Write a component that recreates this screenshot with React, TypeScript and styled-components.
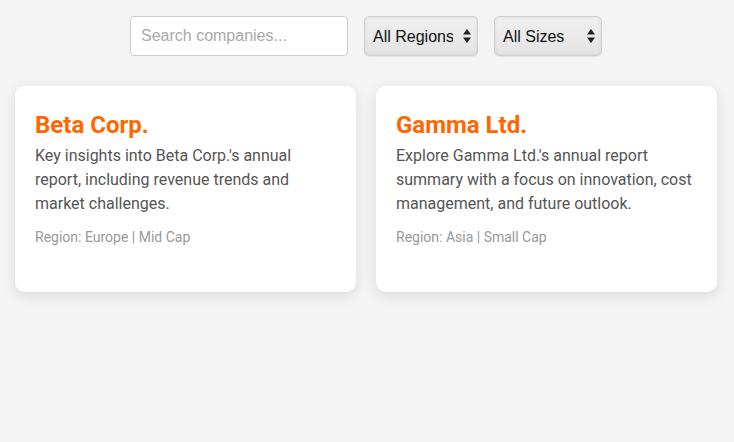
import React from "react";
import styled, { createGlobalStyle } from "styled-components";

const GlobalStyle = createGlobalStyle`
  html, body { margin: 0; padding: 0; }
  body {
    background: #f4f4f4;
    font-family: Roboto, "Liberation Sans", Arial, sans-serif;
    min-height: 442px;
  }
`;

const Page = styled.div`
  display: flex;
  flex-direction: column;
  gap: 30px;
  padding: 16px 17px 20px 15px;
`;

const Toolbar = styled.div`
  display: flex;
  justify-content: center;
  gap: 16px;
`;

const SearchInput = styled.input`
  box-sizing: border-box;
  width: 218px;
  height: 40px;
  padding: 0 10px;
  border: 1px solid #cccccc;
  border-radius: 4px;
  background: #fff;
  font-family: "Liberation Sans", Arial, sans-serif;
  font-size: 16px;
  color: #333;
  outline: none;
  &::placeholder { color: #a9a9a9; }
`;

const SelectWrap = styled.div<{ $w: number }>`
  position: relative;
  width: ${(p) => p.$w}px;
  height: 40px;
`;

const Select = styled.select`
  appearance: none;
  -webkit-appearance: none;
  box-sizing: border-box;
  width: 100%;
  height: 100%;
  padding: 0 24px 0 8px;
  border: 1px solid #d0d0d0;
  border-radius: 5px;
  background: linear-gradient(#efefef, #e9e9e9 60%, #e3e3e3);
  box-shadow: inset 0 0 3px rgba(0, 0, 0, 0.1), 0 1px 1px rgba(0, 0, 0, 0.06);
  font-family: "Liberation Sans", Arial, sans-serif;
  font-size: 16px;
  color: #111;
  outline: none;
`;

const Arrows = styled.svg`
  position: absolute;
  right: 7px;
  top: 13px;
  width: 8px;
  height: 14px;
  pointer-events: none;
`;

const Grid = styled.div`
  display: grid;
  grid-template-columns: 1fr 1fr;
  gap: 20px;
`;

const Card = styled.div`
  box-sizing: border-box;
  min-height: 206px;
  padding: 25px 20px 20px;
  background: #fff;
  border-radius: 10px;
  box-shadow: 0 4px 14px rgba(0, 0, 0, 0.1);
  display: flex;
  flex-direction: column;
`;

const Title = styled.h2`
  margin: 0 0 5px;
  font-size: 24px;
  font-weight: 700;
  line-height: 28px;
  color: #ff6600;
`;

const Desc = styled.p`
  margin: 0 0 11px;
  font-size: 16px;
  line-height: 24px;
  color: #555;
`;

const Meta = styled.p`
  margin: 0;
  font-size: 14px;
  line-height: 21px;
  color: #999;
`;

const ArrowIcon = () => (
  <Arrows viewBox="0 0 8 14">
    <path d="M4 0 L8 5.5 L0 5.5 Z" fill="#222" />
    <path d="M4 14 L8 8.5 L0 8.5 Z" fill="#222" />
  </Arrows>
);

const companies = [
  {
    name: "Beta Corp.",
    desc: "Key insights into Beta Corp.'s annual report, including revenue trends and market challenges.",
    meta: "Region: Europe | Mid Cap",
  },
  {
    name: "Gamma Ltd.",
    desc: "Explore Gamma Ltd.'s annual report summary with a focus on innovation, cost management, and future outlook.",
    meta: "Region: Asia | Small Cap",
  },
];

export default function App() {
  return (
    <>
      <GlobalStyle />
      <Page>
        <Toolbar>
          <SearchInput placeholder="Search companies..." />
          <SelectWrap $w={114}>
            <Select defaultValue="all">
              <option value="all">All Regions</option>
              <option value="europe">Europe</option>
              <option value="asia">Asia</option>
            </Select>
            <ArrowIcon />
          </SelectWrap>
          <SelectWrap $w={108}>
            <Select defaultValue="all">
              <option value="all">All Sizes</option>
              <option value="mid">Mid Cap</option>
              <option value="small">Small Cap</option>
            </Select>
            <ArrowIcon />
          </SelectWrap>
        </Toolbar>
        <Grid>
          {companies.map((c) => (
            <Card key={c.name}>
              <Title>{c.name}</Title>
              <Desc>{c.desc}</Desc>
              <Meta>{c.meta}</Meta>
            </Card>
          ))}
        </Grid>
      </Page>
    </>
  );
}
